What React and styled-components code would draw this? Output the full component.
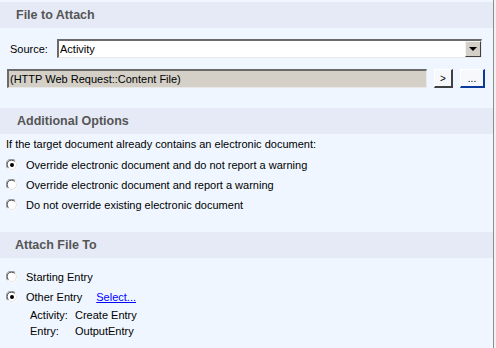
import React from "react";
import styled, { createGlobalStyle } from "styled-components";

const Global = createGlobalStyle`
  html, body { margin: 0; padding: 0; background: #eff6ff; }
  body { font-family: "Liberation Sans", Arial, sans-serif; font-size: 11px; color: #000; }
`;

const Frame = styled.div`
  display: flex;
  width: 496px;
  height: 348px;
  overflow: hidden;
`;

const Main = styled.div`
  flex: 1;
  display: flex;
  flex-direction: column;
  background: #eff6ff;
`;

const Edge = styled.div`
  width: 2px;
  border-left: 1px solid #8e8e8e;
  background: #f1f1f1;
`;

const Header = styled.div`
  margin-top: ${(p) => p.$mt}px;
  height: 26px;
  line-height: 26px;
  padding-left: ${(p) => p.$pl}px;
  font-weight: bold;
  font-size: 12.5px;
  color: #555555;
  background-color: #e6eaf6;
  background-image: radial-gradient(#dcdff0 0.6px, transparent 0.7px);
  background-size: 2px 2px;
`;

const Row = styled.div`
  display: flex;
  align-items: center;
  margin-top: ${(p) => p.$mt || 0}px;
  padding-left: ${(p) => p.$pl || 0}px;
  height: ${(p) => p.$h || 19}px;
`;

const Label = styled.span`
  width: ${(p) => p.$w}px;
  flex: none;
`;

const Sunken = styled.div`
  box-sizing: border-box;
  height: 19px;
  width: ${(p) => p.$w}px;
  display: flex;
  align-items: center;
  border-top: 2px solid #6a6a6a;
  border-left: 2px solid #6a6a6a;
  border-right: 1px solid #e8e8e8;
  border-bottom: 1px solid #e8e8e8;
  background: ${(p) => p.$bg};
  padding-left: 1px;
`;

const DropBtn = styled.div`
  margin-left: auto;
  box-sizing: border-box;
  width: 16px;
  height: 16px;
  background: #d4d0c8;
  border-top: 1px solid #f4f4f4;
  border-left: 1px solid #f4f4f4;
  border-right: 1px solid #404040;
  border-bottom: 1px solid #404040;
  display: flex;
  align-items: center;
  justify-content: center;
`;

const Arrow = styled.div`
  width: 0;
  height: 0;
  border-left: 4px solid transparent;
  border-right: 4px solid transparent;
  border-top: 4px solid #000;
`;

const Btn = styled.div`
  box-sizing: border-box;
  margin-left: ${(p) => p.$ml}px;
  width: ${(p) => p.$w}px;
  height: 19px;
  background: #f6f8fb;
  border-top: 1px solid #ffffff;
  border-left: 1px solid #ffffff;
  border-right: 2px solid ${(p) => p.$edge};
  border-bottom: 2px solid ${(p) => p.$edge};
  display: flex;
  align-items: center;
  justify-content: center;
  font-size: 10px;
  padding-top: 1px;
`;

const Desc = styled.div`
  padding-left: 6px;
  height: 21px;
  line-height: 21px;
`;

const RadioRow = styled.label`
  display: flex;
  align-items: center;
  height: 20px;
  padding-left: 6px;
  gap: 8px;
`;

const Link = styled.a`
  color: #0000ff;
  text-decoration: underline;
  margin-left: 14px;
`;

const InfoRow = styled.div`
  display: flex;
  height: 16px;
  line-height: 16px;
  padding-left: 30px;
`;

function Radio({ checked }) {
  return (
    <svg width="12" height="12" viewBox="0 0 12 12" style={{ flex: "none" }}>
      <circle cx="6" cy="6" r="5.5" fill="#fff" />
      <path d="M1.6 9.2 A5 5 0 0 1 9.2 1.6" fill="none" stroke="#8a8a8a" strokeWidth="1" />
      <path d="M2.4 8.6 A4 4 0 0 1 8.6 2.4" fill="none" stroke="#404040" strokeWidth="1" />
      <path d="M9.6 2.6 A5 5 0 0 1 2.6 9.6" fill="none" stroke="#e4e4e4" strokeWidth="1" />
      {checked && <circle cx="6" cy="6" r="2" fill="#000" />}
    </svg>
  );
}

export default function App() {
  return (
    <Frame>
      <Global />
      <Main>
        <Header $mt={2} $pl={16}>File to Attach</Header>
        <Row $mt={11} $pl={10}>
          <Label $w={47}>Source:</Label>
          <Sunken $w={425} $bg="#ffffff">
            Activity
            <DropBtn><Arrow /></DropBtn>
          </Sunken>
        </Row>
        <Row $mt={11} $pl={7}>
          <Sunken $w={420} $bg="#d4d0c8">(HTTP Web Request::Content File)</Sunken>
          <Btn $ml={7} $w={19} $edge="#404040">&gt;</Btn>
          <Btn $ml={7} $w={25} $edge="#0a3a9a">...</Btn>
        </Row>
        <Header $mt={20} $pl={17}>Additional Options</Header>
        <Desc>If the target document already contains an electronic document:</Desc>
        <RadioRow><Radio checked />Override electronic document and do not report a warning</RadioRow>
        <RadioRow><Radio />Override electronic document and report a warning</RadioRow>
        <RadioRow><Radio />Do not override existing electronic document</RadioRow>
        <Header $mt={17} $pl={15}>Attach File To</Header>
        <Row $mt={9} $h={20}>
          <RadioRow><Radio />Starting Entry</RadioRow>
        </Row>
        <Row $h={20}>
          <RadioRow><Radio checked />Other Entry</RadioRow>
          <Link href="#">Select...</Link>
        </Row>
        <InfoRow><Label $w={45}>Activity:</Label>Create Entry</InfoRow>
        <InfoRow><Label $w={45}>Entry:</Label>OutputEntry</InfoRow>
      </Main>
      <Edge />
    </Frame>
  );
}
